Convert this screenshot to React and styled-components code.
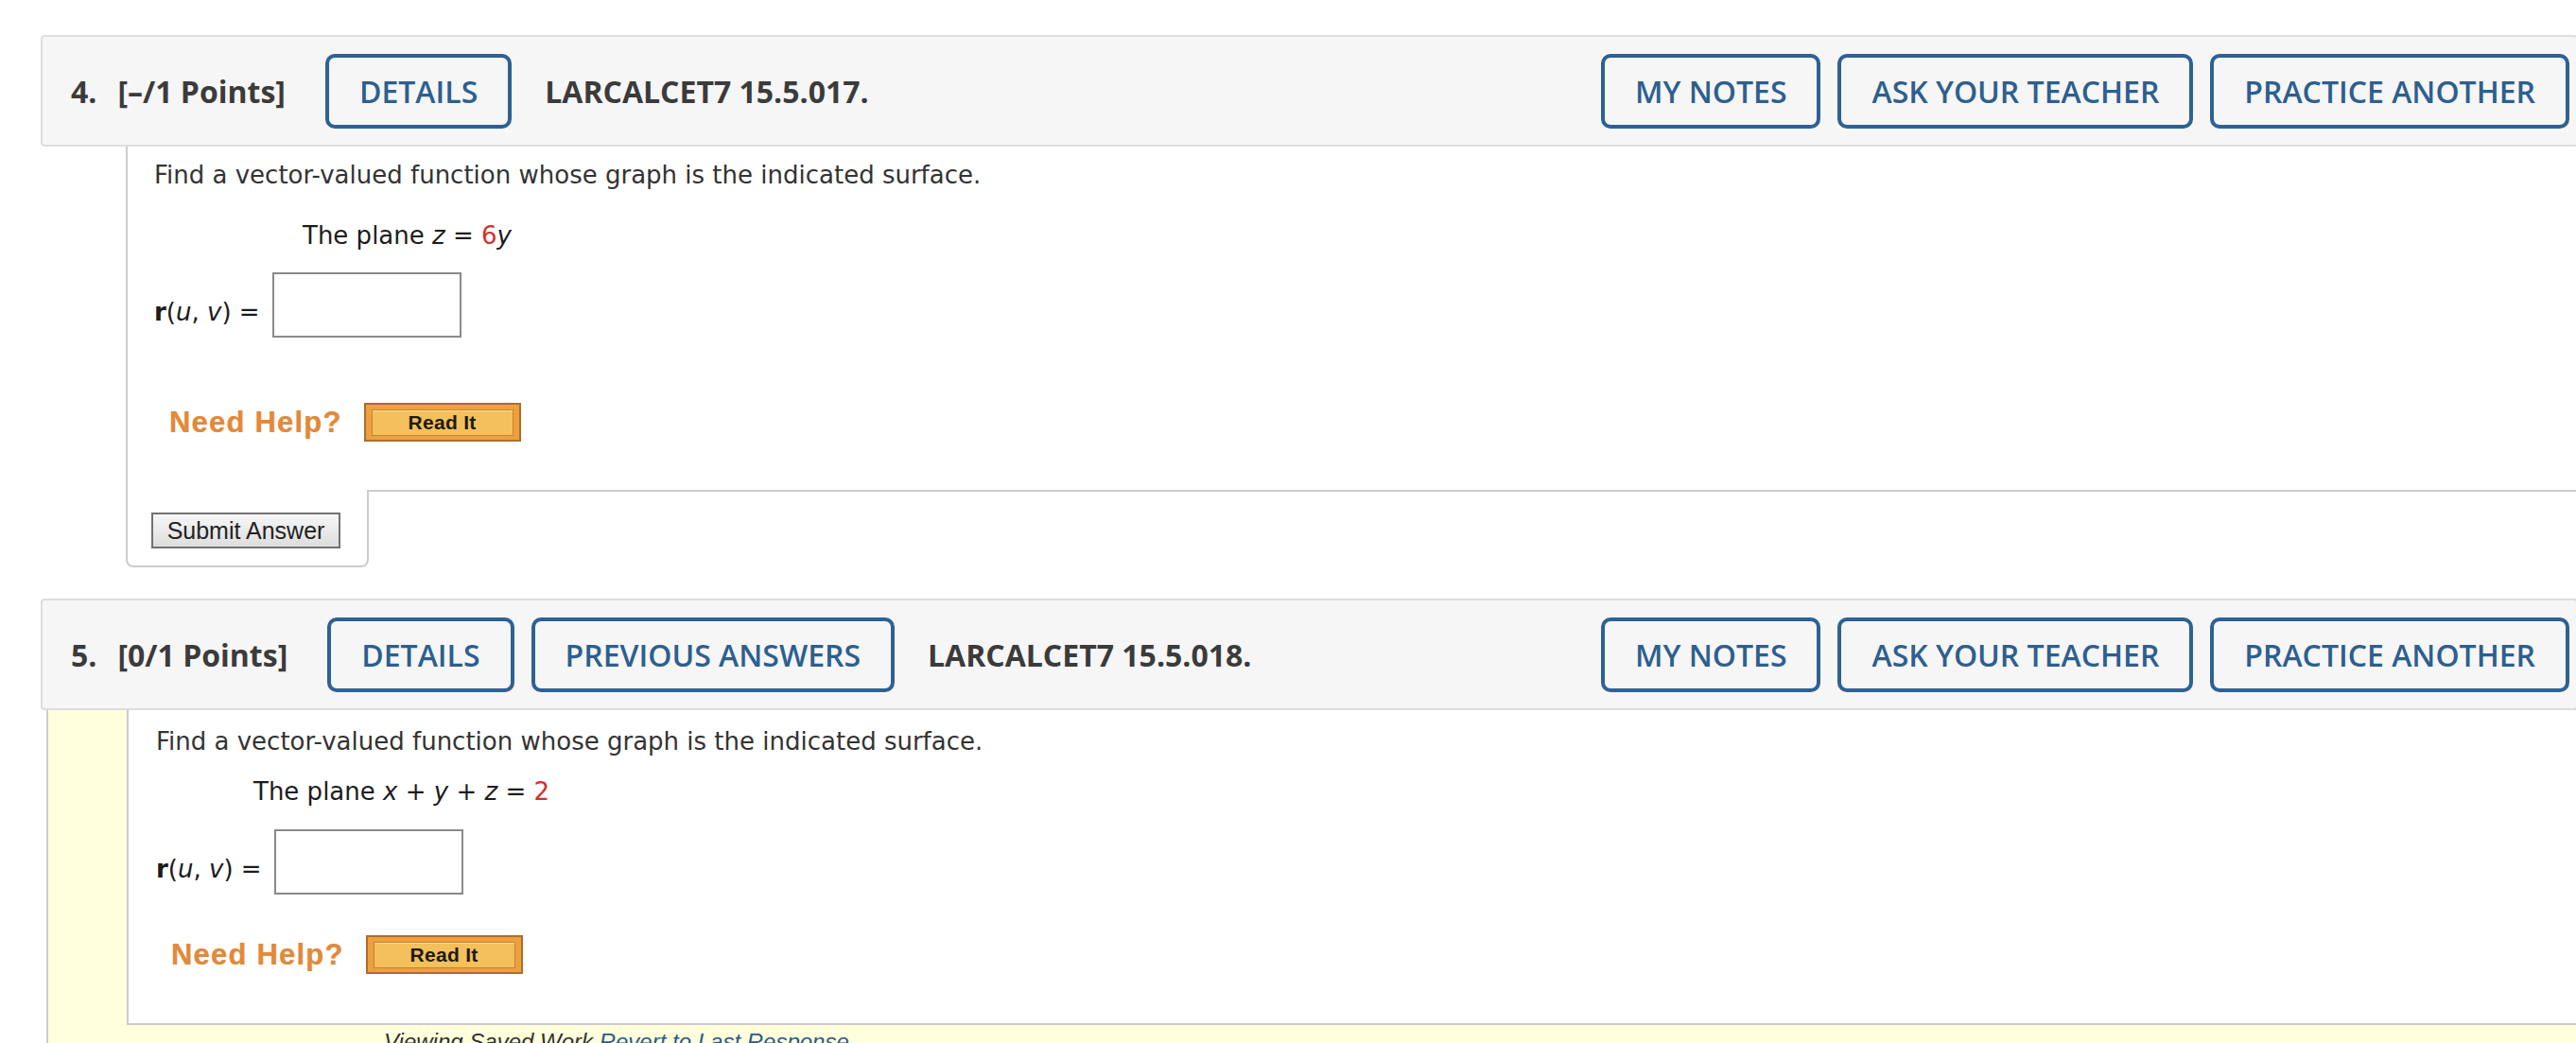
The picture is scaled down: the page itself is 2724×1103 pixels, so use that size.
import styled, { createGlobalStyle } from 'styled-components';

const GlobalStyle = createGlobalStyle`
    html, body {
        margin: 0;
        padding: 0;
        background: #ffffff;
        overflow: hidden;
    }
    * {
        box-sizing: border-box;
    }
`

const Page = styled.div`
    padding: 37px 0 0 43px;
    width: 100vw;
    min-height: 100vh;
`

const Question = styled.section`
    width: calc(100vw - 41px);
    margin-bottom: ${p => p.$gap || 0}px;
`

const Header = styled.div`
    display: flex;
    align-items: center;
    gap: 18px;
    padding: 18px 7px 17px 30px;
    background: #f6f6f6;
    border: 2px solid #dddddd;
    border-radius: 4px;
    font-family: "Open Sans", "Liberation Sans", sans-serif;
`

const Points = styled.div`
    display: flex;
    gap: 22px;
    margin-right: 24px;
    font-size: 32px;
    font-weight: 700;
    color: #3b3b3b;
    white-space: nowrap;
`

const Code = styled.div`
    margin-left: 17px;
    font-size: 32px;
    font-weight: 700;
    color: #3b3b3b;
    white-space: nowrap;
`

const Actions = styled.div`
    display: flex;
    gap: 18px;
    margin-left: auto;
    flex-shrink: 0;
`

const HeaderButton = styled.button`
    flex-shrink: 0;
    height: 79px;
    padding: 0 32px;
    border: 4px solid #2e6194;
    border-radius: 10px;
    background: transparent;
    font-family: "Open Sans", "Liberation Sans", sans-serif;
    font-size: 32px;
    font-weight: 600;
    color: #2d5f8f;
    white-space: nowrap;
    cursor: pointer;
`

const SavedArea = styled.div`
    margin-left: 6px;
    background: #ffffdb;
    border-left: 2px solid #cfcfcf;
    padding-bottom: 40px;
`

const Body = styled.div`
    margin-left: ${p => p.$offset}px;
    background: #ffffff;
`

const Content = styled.div`
    border-left: 2px solid #cccccc;
    border-bottom: ${p => (p.$closed ? '2px solid #cccccc' : 'none')};
    padding: ${p => p.$top}px 0 ${p => p.$bottom}px ${p => p.$left}px;
    font-family: "DejaVu Sans", Verdana, sans-serif;
    font-size: 26px;
    line-height: 30px;
    color: #262626;
    background: #ffffff;
`

const Prompt = styled.p`
    margin: 0;
    color: #333333;
`

const Statement = styled.p`
    margin: ${p => p.$space}px 0 0 0;
    padding-left: ${p => p.$indent}px;
    color: #1c1c1c;

    i {
        font-style: italic;
    }
`

const Given = styled.span`
    color: #d4302b;
`

const AnswerRow = styled.div`
    display: flex;
    align-items: center;
    gap: 13px;
    margin-top: ${p => p.$space}px;
`

const AnswerLabel = styled.span`
    padding-top: 14px;
    color: #1c1c1c;
    white-space: nowrap;

    b {
        font-weight: 700;
    }
`

const AnswerInput = styled.input`
    width: 200px;
    height: 69px;
    border: 2px solid #8a8a8a;
    background: #ffffff;
    outline: none;
`

const HelpRow = styled.div`
    display: flex;
    align-items: center;
    gap: 23px;
    margin-top: ${p => p.$space}px;
    padding-left: 16px;
`

const NeedHelp = styled.span`
    font-family: "Liberation Sans", Arial, sans-serif;
    font-size: 31px;
    font-weight: 700;
    letter-spacing: 1.2px;
    color: #e2893a;
    text-shadow: 0 0 1px rgba(226, 137, 58, 0.6);
`

const ReadItButton = styled.button`
    display: flex;
    padding: 5px 6px 4px 6px;
    border: 2px solid #a96f2d;
    background: #ee9f3f;
    cursor: pointer;
`

const ReadItFace = styled.span`
    display: flex;
    align-items: center;
    justify-content: center;
    width: 150px;
    height: 28px;
    border: 1px solid #c5842f;
    background: #f3c05b;
    box-shadow: inset 0 1px 0 rgba(255, 240, 200, 0.6);
    font-family: "Liberation Sans", Arial, sans-serif;
    font-size: 21px;
    font-weight: 700;
    letter-spacing: 0.3px;
    color: #1e1a12;
`

const SubmitRow = styled.div`
    display: flex;
    align-items: flex-start;
`

const SubmitBox = styled.div`
    width: 257px;
    padding: 24px 0 18px 25px;
    border: 2px solid #cccccc;
    border-top: none;
    border-radius: 0 0 8px 8px;
    background: #ffffff;
`

const SubmitFiller = styled.div`
    flex: 1;
    border-top: 2px solid #cccccc;
`

const SubmitButton = styled.button`
    display: block;
    width: 200px;
    height: 38px;
    padding: 0;
    border: 2px solid #717171;
    background: linear-gradient(#f7f7f7, #dddddd);
    font-family: "Liberation Sans", Arial, sans-serif;
    font-size: 25px;
    color: #222222;
    cursor: pointer;
`

const SavedNote = styled.div`
    padding: 4px 0 0 355px;
    font-family: "Liberation Sans", Arial, sans-serif;
    font-size: 24px;
    font-style: italic;
    color: #333333;

    a {
        color: #2b5d8c;
        text-decoration: none;
    }
`

function QuestionHeader({ number, points, code, previous }) {
    return (
        <Header>
            <Points>
                <span>{number}.</span>
                <span>[{points} Points]</span>
            </Points>
            <HeaderButton>DETAILS</HeaderButton>
            {previous && <HeaderButton>PREVIOUS ANSWERS</HeaderButton>}
            <Code>{code}</Code>
            <Actions>
                <HeaderButton>MY NOTES</HeaderButton>
                <HeaderButton>ASK YOUR TEACHER</HeaderButton>
                <HeaderButton>PRACTICE ANOTHER</HeaderButton>
            </Actions>
        </Header>
    );
}

function HelpLine({ space }) {
    return (
        <HelpRow $space={space}>
            <NeedHelp>Need Help?</NeedHelp>
            <ReadItButton>
                <ReadItFace>Read It</ReadItFace>
            </ReadItButton>
        </HelpRow>
    );
}

export default function App() {
    return (
        <Page>
            <GlobalStyle />

            <Question $gap={33}>
                <QuestionHeader number="4" points="–/1" code="LARCALCET7 15.5.017." />
                <Body $offset={90}>
                    <Content $top={15} $bottom={51} $left={28}>
                        <Prompt>Find a vector-valued function whose graph is the indicated surface.</Prompt>
                        <Statement $space={34} $indent={157}>
                            The plane <i>z</i> = <Given>6</Given><i>y</i>
                        </Statement>
                        <AnswerRow $space={24}>
                            <AnswerLabel>
                                <b>r</b>(<i>u</i>, <i>v</i>) =
                            </AnswerLabel>
                            <AnswerInput type="text" />
                        </AnswerRow>
                        <HelpLine space={69} />
                    </Content>
                    <SubmitRow>
                        <SubmitBox>
                            <SubmitButton>Submit Answer</SubmitButton>
                        </SubmitBox>
                        <SubmitFiller />
                    </SubmitRow>
                </Body>
            </Question>

            <Question>
                <QuestionHeader number="5" points="0/1" code="LARCALCET7 15.5.018." previous />
                <SavedArea>
                    <Body $offset={83}>
                        <Content $top={18} $bottom={52} $left={29} $closed>
                            <Prompt>Find a vector-valued function whose graph is the indicated surface.</Prompt>
                            <Statement $space={23} $indent={103}>
                                The plane <i>x</i> + <i>y</i> + <i>z</i> = <Given>2</Given>
                            </Statement>
                            <AnswerRow $space={25}>
                                <AnswerLabel>
                                    <b>r</b>(<i>u</i>, <i>v</i>) =
                                </AnswerLabel>
                                <AnswerInput type="text" />
                            </AnswerRow>
                            <HelpLine space={43} />
                        </Content>
                    </Body>
                    <SavedNote>
                        Viewing Saved Work <a href="#revert">Revert to Last Response</a>
                    </SavedNote>
                </SavedArea>
            </Question>
        </Page>
    );
}
